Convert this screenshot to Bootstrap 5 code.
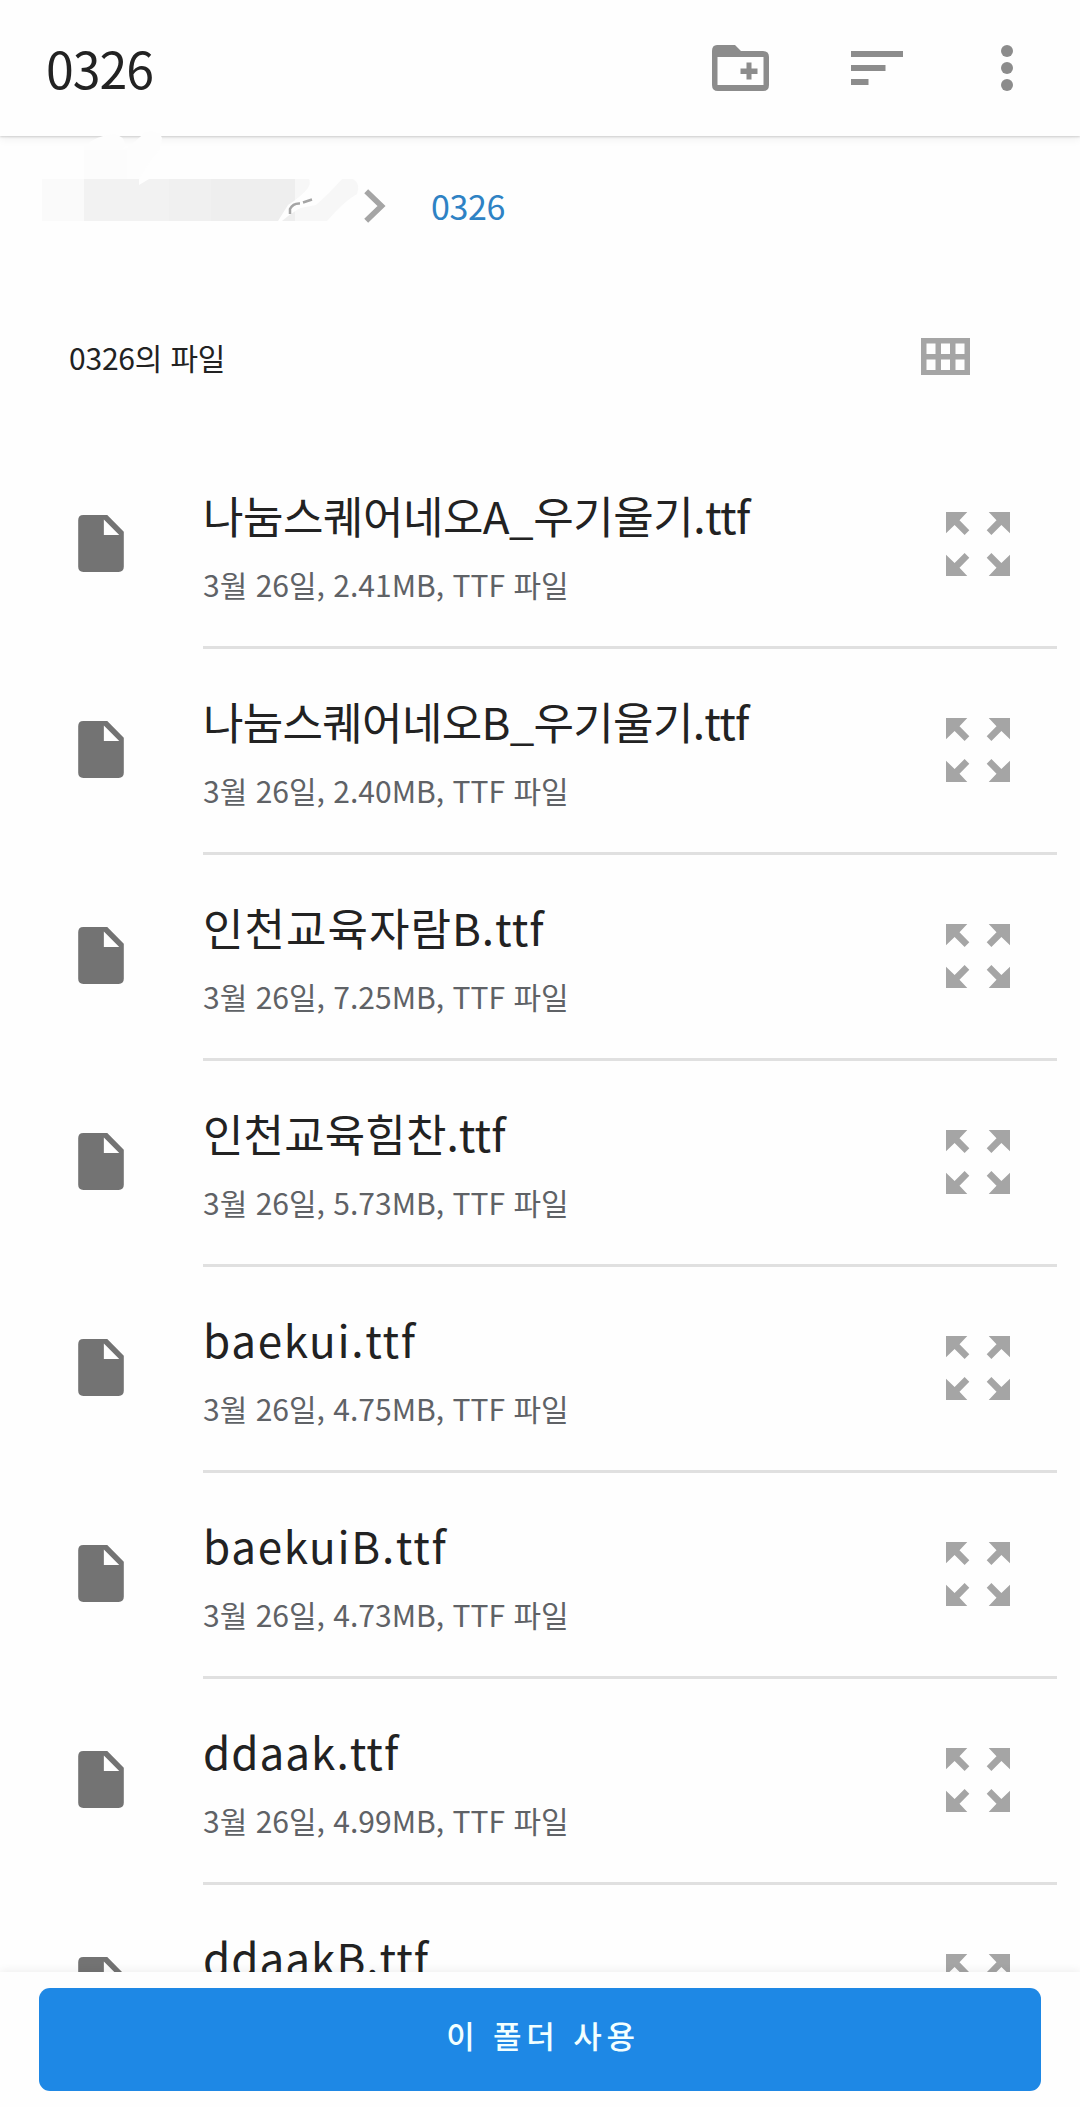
<!DOCTYPE html>
<html lang="ko">
<head>
<meta charset="utf-8">
<meta name="viewport" content="width=device-width, initial-scale=1">
<title>0326</title>
<link href="https://cdn.jsdelivr.net/npm/bootstrap@5.3.0/dist/css/bootstrap.min.css" rel="stylesheet">
<style>
body{font-family:"Noto Sans CJK KR",sans-serif;font-weight:400;color:#222;background:#fefefe}
.screen{width:1080px;height:2107px}
.topbar{height:136px;padding:0 67px 0 46px;background:#fefefe;box-shadow:0 1px 2px rgba(0,0,0,.16),0 3px 9px rgba(0,0,0,.06);z-index:1}
.topbar h1{font-size:50px;font-weight:400;letter-spacing:-1px;line-height:1;padding-bottom:3px}
.topbar svg{fill:#8c8c8c}
.crumbs{height:138px;padding-left:364px}
.crumbs svg{margin-top:2px}
.crumbs a{font-size:34px;font-weight:400;color:#2e82c4;letter-spacing:-.4px;margin-left:45px}
.smudge{left:0;top:128px;z-index:2}
.section-bar{height:169px;padding:0 110px 3px 69px}
.section-bar h2{font-size:30px;font-weight:400;letter-spacing:-.2px}
.section-bar svg{margin-bottom:2px}
.file-row{height:206px;padding-left:78px;padding-right:23px}
.file-row>svg{margin-top:72px;margin-right:79px}
.file-body{border-bottom:3px solid #e0e0e0;padding-right:47px}
.file-name{font-size:44px;line-height:60px;margin-top:42px}
.file-meta{font-size:30px;line-height:40px;margin-top:19px;color:#5f6266}
.file-body svg{margin-top:69px}
.n1{letter-spacing:-.5px}.n2{letter-spacing:-.7px}.n3{letter-spacing:1px}.n4{letter-spacing:.1px}.n5{letter-spacing:1.7px}.n7{letter-spacing:1px}
.action-bar{height:135px;padding:16px 39px;background:#fefefe;box-shadow:0 -2px 8px rgba(0,0,0,.06);z-index:1}
.btn-use{height:103px;background:#1e88e5;color:#f2ffff;border-radius:11px;font-size:31px;font-weight:500;letter-spacing:4.800px;padding:0 0 8px 6px}
</style>
</head>
<body>
<svg width="0" height="0" class="position-absolute">
<symbol id="doc" viewBox="0 0 16 20"><path fill="#737373" d="M1.8 0H10.2L16 5.900V18.200Q16 20 14.200 20H1.800Q0 20 0 18.200V1.800Q0 0 1.800 0ZM9 1.600V7H14.400Z"/></symbol>
<symbol id="expand" viewBox="0 0 64 64"><g fill="#a5a5a5"><path id="arrow" d="M0 0H21.300L13.500 8.300L23.300 18.300L18.600 23L8.600 13L0 21.300Z"/><use href="#arrow" transform="matrix(-1 0 0 1 64 0)"/><use href="#arrow" transform="matrix(1 0 0 -1 0 64)"/><use href="#arrow" transform="matrix(-1 0 0 -1 64 64)"/></g></symbol>
</svg>
<div class="screen position-relative overflow-hidden d-flex flex-column">
<header class="topbar d-flex align-items-center flex-shrink-0 position-relative">
<h1 class="mb-0 me-auto">0326</h1>
<svg width="57" height="46" viewBox="0 0 57 46"><path fill-rule="evenodd" d="M5 0H23L29 6H51Q57 6 57 12V40Q57 46 51 46H6Q0 46 0 40V6Q0 0 5 0ZM5.500 12V40H51.500V12ZM34.500 17.500H39.500V23.500H45.500V29H39.500V34.500H34.500V29H28.500V23.500H34.500Z"/></svg>
<svg width="52" height="34" viewBox="0 0 52 34" style="margin-left:82px"><path d="M0 0H52V6H0ZM0 14H34.500V20H0ZM0 28H17.500V34H0Z"/></svg>
<svg width="12" height="46" viewBox="0 0 12 46" style="margin-left:98px"><circle cx="6" cy="6" r="6"/><circle cx="6" cy="23" r="6"/><circle cx="6" cy="40" r="6"/></svg>
</header>
<nav class="crumbs d-flex align-items-center flex-shrink-0">
<svg width="22" height="34" viewBox="0 0 22 34"><path d="M2.200 2.200L17.500 17L2.200 31.800" fill="none" stroke="#a5a5a5" stroke-width="5.600"/></svg>
<a href="#" class="text-decoration-none">0326</a>
</nav>
<svg class="smudge position-absolute pe-none" width="370" height="100" viewBox="0 128 370 100">
<path fill="#fdfdfd" d="M84 147Q94 136 114 134Q124 136 125 144L122 152L146 132Q160 130 162 138Q162 149 152 158L138 180H84Z"/>
<path fill="#fcfcfc" d="M84 150H127V179H84Z"/>
<path fill="#fafafa" d="M42 179H84V221H42Z"/>
<path fill="#f2f2f2" d="M84 179H169V221H84Z"/>
<path fill="#f0f0f0" d="M169 179H211V221H169Z"/>
<path fill="#eeeeee" d="M211 179H295V221H211Z"/>
<path fill="#f7f7f7" d="M295 179H310V190L295 201ZM295 221V209L316 205Q329 194 342 179H353Q361 184 357 194Q343 202 327 221Z"/>
<path fill="#fefefe" d="M139 179V185L149 179ZM278 221L288 205Q302 196 308 188Q311 184 309 179H342Q330 190 316 201Q298 207 282 221Z"/>
<path fill="none" stroke="#a5a5a5" stroke-width="2.500" d="M290 214V209Q293 203 300 203.500M303 202.500L312 199.500"/>
</svg>
<div class="section-bar d-flex align-items-center justify-content-between flex-shrink-0">
<h2 class="mb-0">0326의 파일</h2>
<svg width="49" height="37" viewBox="0 0 49 37"><path fill="#a5a5a5" fill-rule="evenodd" d="M0 0H49V37H0ZM5.500 5.500V16H14.500V5.500ZM20 5.500V16H29V5.500ZM34.500 5.500V16H43.500V5.500ZM5.500 21.500V32H14.500V21.500ZM20 21.500V32H29V21.500ZM34.500 21.500V32H43.500V21.500Z"/></svg>
</div>
<main class="flex-grow-1 overflow-hidden" style="min-height:0">
<div class="file-row d-flex"><svg class="flex-shrink-0" width="46" height="57"><use href="#doc"/></svg><div class="file-body d-flex flex-grow-1"><div class="me-auto text-nowrap"><div class="file-name n1">나눔스퀘어네오A_우기울기.ttf</div><div class="file-meta">3월 26일, 2.41MB, TTF 파일</div></div><svg width="64" height="64"><use href="#expand"/></svg></div></div>
<div class="file-row d-flex"><svg class="flex-shrink-0" width="46" height="57"><use href="#doc"/></svg><div class="file-body d-flex flex-grow-1"><div class="me-auto text-nowrap"><div class="file-name n2">나눔스퀘어네오B_우기울기.ttf</div><div class="file-meta">3월 26일, 2.40MB, TTF 파일</div></div><svg width="64" height="64"><use href="#expand"/></svg></div></div>
<div class="file-row d-flex"><svg class="flex-shrink-0" width="46" height="57"><use href="#doc"/></svg><div class="file-body d-flex flex-grow-1"><div class="me-auto text-nowrap"><div class="file-name n3">인천교육자람B.ttf</div><div class="file-meta">3월 26일, 7.25MB, TTF 파일</div></div><svg width="64" height="64"><use href="#expand"/></svg></div></div>
<div class="file-row d-flex"><svg class="flex-shrink-0" width="46" height="57"><use href="#doc"/></svg><div class="file-body d-flex flex-grow-1"><div class="me-auto text-nowrap"><div class="file-name n4">인천교육힘찬.ttf</div><div class="file-meta">3월 26일, 5.73MB, TTF 파일</div></div><svg width="64" height="64"><use href="#expand"/></svg></div></div>
<div class="file-row d-flex"><svg class="flex-shrink-0" width="46" height="57"><use href="#doc"/></svg><div class="file-body d-flex flex-grow-1"><div class="me-auto text-nowrap"><div class="file-name n5">baekui.ttf</div><div class="file-meta">3월 26일, 4.75MB, TTF 파일</div></div><svg width="64" height="64"><use href="#expand"/></svg></div></div>
<div class="file-row d-flex"><svg class="flex-shrink-0" width="46" height="57"><use href="#doc"/></svg><div class="file-body d-flex flex-grow-1"><div class="me-auto text-nowrap"><div class="file-name n5">baekuiB.ttf</div><div class="file-meta">3월 26일, 4.73MB, TTF 파일</div></div><svg width="64" height="64"><use href="#expand"/></svg></div></div>
<div class="file-row d-flex"><svg class="flex-shrink-0" width="46" height="57"><use href="#doc"/></svg><div class="file-body d-flex flex-grow-1"><div class="me-auto text-nowrap"><div class="file-name n7">ddaak.ttf</div><div class="file-meta">3월 26일, 4.99MB, TTF 파일</div></div><svg width="64" height="64"><use href="#expand"/></svg></div></div>
<div class="file-row d-flex"><svg class="flex-shrink-0" width="46" height="57"><use href="#doc"/></svg><div class="file-body d-flex flex-grow-1"><div class="me-auto text-nowrap"><div class="file-name n7">ddaakB.ttf</div></div><svg width="64" height="64"><use href="#expand"/></svg></div></div>
</main>
<footer class="action-bar flex-shrink-0 position-relative"><button type="button" class="btn btn-use w-100 border-0">이 폴더 사용</button></footer>
</div>
<script src="https://cdn.jsdelivr.net/npm/bootstrap@5.3.0/dist/js/bootstrap.bundle.min.js"></script>
</body>
</html>
